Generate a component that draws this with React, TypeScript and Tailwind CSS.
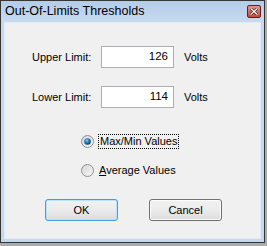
import React from "react";

const font = { fontFamily: '"Liberation Sans", Arial, sans-serif' };

function Radio({ checked }: { checked?: boolean }) {
  return (
    <svg width="13" height="13" viewBox="0 0 13 13" className="shrink-0">
      <defs>
        <linearGradient id="rbg" x1="0" y1="0" x2="1" y2="1">
          <stop offset="0" stopColor="#d0d0d0" />
          <stop offset="1" stopColor="#fbfbfb" />
        </linearGradient>
        <radialGradient id="dot" cx="0.4" cy="0.35" r="0.7">
          <stop offset="0" stopColor="#8ad1f5" />
          <stop offset="0.5" stopColor="#1a78b8" />
          <stop offset="1" stopColor="#0b2f4a" />
        </radialGradient>
      </defs>
      <circle cx="6.5" cy="6.5" r="6" fill="url(#rbg)" stroke="#8e8f8f" strokeWidth="1" />
      <circle cx="6.5" cy="6.5" r="4.3" fill="none" stroke="#e8e8e8" strokeWidth="0.8" />
      {checked && <circle cx="6.5" cy="6.5" r="3.3" fill="url(#dot)" />}
    </svg>
  );
}

function CloseButton() {
  return (
    <div className="w-[14px] h-[13px] rounded-[2px] border border-[#5e2222] bg-gradient-to-b from-[#e3948a] to-[#c4473b] flex items-center justify-center">
      <svg width="8" height="7" viewBox="0 0 8 7">
        <path d="M1 0.8 L7 6.2 M7 0.8 L1 6.2" stroke="#4a1818" strokeWidth="2.6" strokeLinecap="square" />
        <path d="M1 0.8 L7 6.2 M7 0.8 L1 6.2" stroke="#ffffff" strokeWidth="1.3" strokeLinecap="square" />
      </svg>
    </div>
  );
}

function LimitRow({ label, value }: { label: string; value: string }) {
  return (
    <div className="flex items-center h-[22px] pl-[27px]">
      <span className="w-[69px] text-[11px] text-black">{label}</span>
      <div className="w-[73px] h-[22px] bg-white border border-[#abadb3] flex items-center justify-end pr-[5px] text-[11.5px] text-black">
        {value}
      </div>
      <span className="ml-[10px] text-[11px] text-black">Volts</span>
    </div>
  );
}

export default function App() {
  return (
    <div className="w-[267px] h-[246px] bg-[#ababab]" style={font}>
      <div className="w-[265px] h-[243px] border border-[#353535] bg-[#c4d9ee] flex flex-col">
        {/* title bar */}
        <div className="h-[21px] shrink-0 flex items-center justify-between pl-[4px] pr-[3px] bg-gradient-to-b from-[#b3cce8] to-[#c8dbef]">
          <span className="text-[12.5px] text-black leading-none">Out-Of-Limits Thresholds</span>
          <CloseButton />
        </div>

        {/* client area */}
        <div className="flex-1 mx-[3px] mb-[3px] border border-[#e0ebf6] bg-[#f0f0f0] flex flex-col">
          <div className="mt-[23px]">
            <LimitRow label="Upper Limit:" value="126" />
          </div>
          <div className="mt-[18px]">
            <LimitRow label="Lower Limit:" value="114" />
          </div>

          <div className="mt-[26px] ml-[76px] flex items-center h-[14px] gap-[4px]">
            <Radio checked />
            <span className="text-[11px] text-black leading-none border border-dotted border-black px-[1px] py-[1px]">
              Max/Min Values
            </span>
          </div>
          <div className="mt-[15px] ml-[76px] flex items-center h-[14px] gap-[5px]">
            <Radio />
            <span className="text-[11px] text-black leading-none">
              <span className="underline">A</span>verage Values
            </span>
          </div>

          <div className="mt-[22px] ml-[40px] flex gap-[31px]">
            <button className="w-[73px] h-[22px] rounded-[3px] border border-[#3c9fe0] bg-gradient-to-b from-[#f2f2f2] via-[#ebebeb] to-[#dcdcdc] text-[11px] text-black shadow-[inset_0_0_0_1px_#b8e3fa]">
              OK
            </button>
            <button className="w-[73px] h-[22px] rounded-[3px] border border-[#707070] bg-gradient-to-b from-[#f2f2f2] via-[#ebebeb] to-[#dcdcdc] text-[11px] text-black shadow-[inset_0_0_0_1px_#fcfcfc]">
              Cancel
            </button>
          </div>
        </div>
      </div>
    </div>
  );
}
